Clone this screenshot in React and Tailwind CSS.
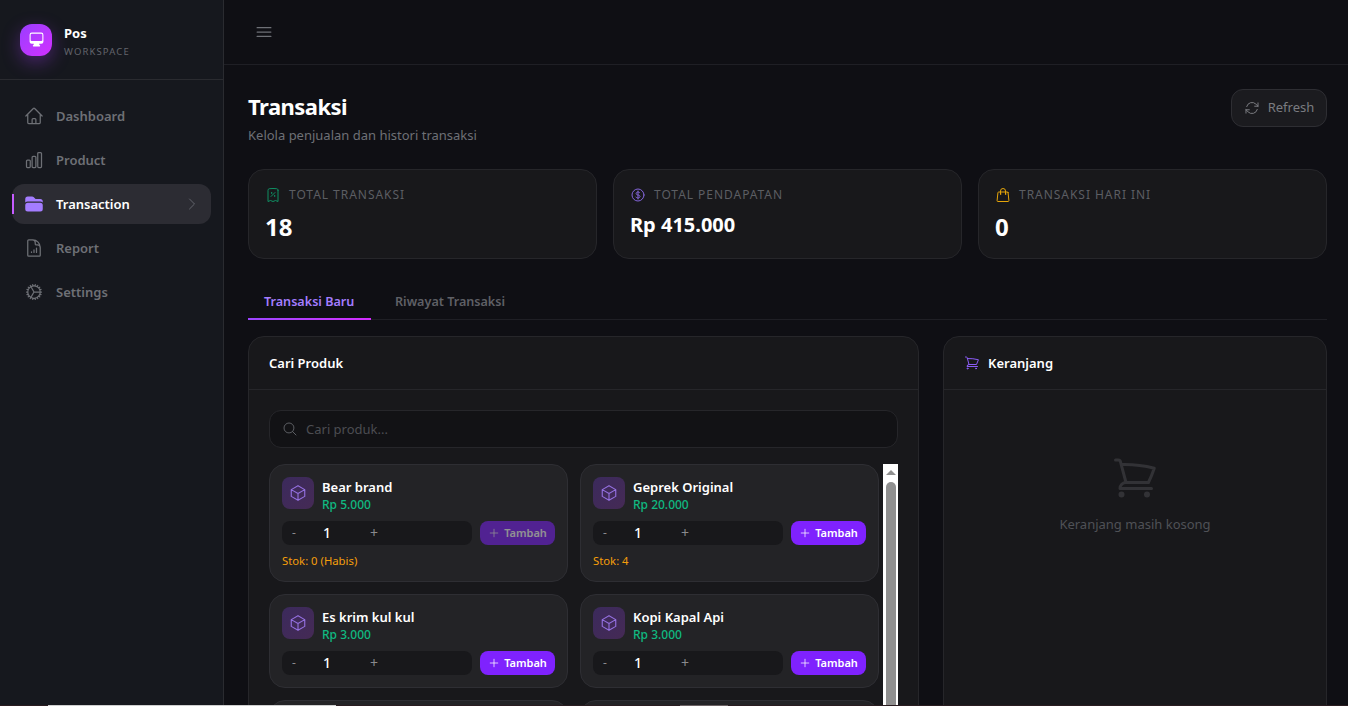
import {
  HiComputerDesktop,
  HiFolder,
  HiOutlineArrowPath,
  HiOutlineBars3,
  HiOutlineChartBar,
  HiOutlineChevronRight,
  HiOutlineCog,
  HiOutlineCube,
  HiOutlineCurrencyDollar,
  HiOutlineDocumentChartBar,
  HiOutlineHome,
  HiOutlineMagnifyingGlass,
  HiOutlinePlus,
  HiOutlineReceiptPercent,
  HiOutlineShoppingBag,
  HiOutlineShoppingCart,
} from "react-icons/hi2";

const navItems = [
  { label: "Dashboard", icon: HiOutlineHome },
  { label: "Product", icon: HiOutlineChartBar },
  { label: "Transaction", icon: HiFolder, active: true },
  { label: "Report", icon: HiOutlineDocumentChartBar },
  { label: "Settings", icon: HiOutlineCog },
];

const products = [
  { name: "Bear brand", price: "Rp 5.000", stock: "Stok: 0 (Habis)", disabled: true },
  { name: "Geprek Original", price: "Rp 20.000", stock: "Stok: 4" },
  { name: "Es krim kul kul", price: "Rp 3.000" },
  { name: "Kopi Kapal Api", price: "Rp 3.000" },
];

function Sidebar() {
  return (
    <aside className="flex w-[224px] shrink-0 flex-col border-r border-[#2a2b30] bg-[#16181e]">
      {/* Logo */}
      <div className="flex h-[80px] items-center gap-3 border-b border-[#2a2b30] px-5">
        <div className="flex h-8 w-8 items-center justify-center rounded-xl bg-gradient-to-br from-[#9a3cff] to-[#d22eff] text-white shadow-[0_6px_18px_rgba(168,60,255,0.35)]">
          <HiComputerDesktop className="h-[17px] w-[17px]" />
        </div>
        <div className="pt-[3px]">
          <p className="text-[13px] leading-[18px] font-bold text-white">Pos</p>
          <p className="mt-[3px] text-[9.5px] leading-[14px] tracking-[0.12em] text-[#62646c]">WORKSPACE</p>
        </div>
      </div>

      {/* Navigation */}
      <nav className="flex flex-col gap-1 px-3 py-4">
        {navItems.map((item) => (
          <div
            key={item.label}
            className={`relative flex h-10 items-center rounded-xl pl-3 pr-[11px] ${
              item.active ? "bg-[#2c2c33] text-white" : "text-[#6e7076]"
            }`}
          >
            {item.active && <span className="absolute left-0 top-[10px] h-5 w-[2px] bg-[#c65cff]" />}
            <item.icon className={`h-5 w-5 shrink-0 ${item.active ? "text-[#a47dff]" : ""}`} />
            <span className="ml-3 mt-[2px] text-[13px] font-semibold">{item.label}</span>
            {item.active && <HiOutlineChevronRight className="ml-auto h-4 w-4 text-[#62646c]" />}
          </div>
        ))}
      </nav>
    </aside>
  );
}

function StatCard({ icon: Icon, iconClass, label, value, valueClass }) {
  return (
    <div className="rounded-2xl border border-[#26262a] bg-[#18181b] px-4 pt-[17px]">
      <div className="flex items-center gap-2">
        <Icon className={`h-4 w-4 ${iconClass}`} />
        <span className="text-xs leading-4 tracking-[0.08em] text-[#5c5e63]">{label}</span>
      </div>
      <p className={`font-bold text-white ${valueClass}`}>{value}</p>
    </div>
  );
}

function ProductCard({ product }) {
  return (
    <div className="self-start rounded-2xl border border-[#2e2e33] bg-[#232326] p-3">
      <div className="flex items-start gap-2">
        <div className="flex h-8 w-8 shrink-0 items-center justify-center rounded-lg bg-gradient-to-br from-[#3b2a5c] to-[#452a55] text-[#9470e0]">
          <HiOutlineCube className="h-[18px] w-[18px]" />
        </div>
        <div>
          <p className="text-[13px] leading-5 font-semibold text-white">{product.name}</p>
          <p className="text-xs leading-4 font-medium text-[#10b981]">{product.price}</p>
        </div>
      </div>

      <div className="mt-2 flex gap-2">
        <div className="flex h-6 w-[190px] items-center rounded-lg bg-[#18181b] text-[#8a8a8e]">
          <span className="w-6 text-center text-xs">-</span>
          <span className="w-[42px] text-center text-sm font-medium text-white">1</span>
          <span className="ml-[14px] w-6 text-center text-sm">+</span>
        </div>
        <button
          className={`flex h-6 w-[75px] items-center justify-center gap-1 rounded-lg bg-[#7f22fe] text-[11px] font-semibold text-white ${
            product.disabled ? "opacity-50" : ""
          }`}
        >
          <HiOutlinePlus className="h-3 w-3" />
          Tambah
        </button>
      </div>

      {product.stock && <p className="mt-2 text-[11.3px] leading-4 text-[#f59e0b]">{product.stock}</p>}
    </div>
  );
}

export default function App() {
  return (
    <div
      className="relative flex h-screen overflow-hidden bg-[#0f0f14]"
      style={{ fontFamily: '"Noto Sans", sans-serif' }}
    >
      <Sidebar />

      <div className="flex min-w-0 flex-1 flex-col">
        {/* Topbar */}
        <header className="flex h-[65px] shrink-0 items-center border-b border-[#1f1f25] pl-[30px]">
          <HiOutlineBars3 className="h-5 w-5 text-[#6e7076]" />
        </header>

        <main className="min-h-0 flex-1 overflow-hidden pl-6 pr-[21px] pt-6">
          {/* Page title */}
          <div className="flex items-start justify-between">
            <div>
              <h1 className="text-[22px] leading-[34px] font-bold tracking-[-0.025em] text-white">Transaksi</h1>
              <p className="mt-[2px] text-[13px] leading-5 text-[#6e7076]">Kelola penjualan dan histori transaksi</p>
            </div>
            <button className="flex h-[38px] w-24 items-center justify-center gap-2 rounded-xl border border-[#2e2e33] bg-[#1b1b1f] text-[13px] text-[#7a7b80]">
              <HiOutlineArrowPath className="h-4 w-4" />
              Refresh
            </button>
          </div>

          {/* Stats */}
          <div className="mt-6 grid h-[90px] grid-cols-3 gap-4">
            <StatCard
              icon={HiOutlineReceiptPercent}
              iconClass="text-[#0f8f63]"
              label="TOTAL TRANSAKSI"
              value="18"
              valueClass="mt-2 text-2xl leading-8"
            />
            <StatCard
              icon={HiOutlineCurrencyDollar}
              iconClass="text-[#8264d8]"
              label="TOTAL PENDAPATAN"
              value="Rp 415.000"
              valueClass="mt-2 text-xl leading-7"
            />
            <StatCard
              icon={HiOutlineShoppingBag}
              iconClass="text-[#e5a50a]"
              label="TRANSAKSI HARI INI"
              value="0"
              valueClass="mt-2 text-2xl leading-8"
            />
          </div>

          {/* Tabs */}
          <div className="mt-[26px] flex h-[35px] gap-2 border-b border-[#1f1f25]">
            <div className="relative w-[123px] pl-4 text-[12.6px] leading-[34px] font-semibold text-[#a47dff]">
              Transaksi Baru
              <span className="absolute inset-x-0 bottom-[-1px] h-[2px] bg-gradient-to-r from-[#9b45ff] to-[#d42cff]" />
            </div>
            <div className="px-4 text-[12.6px] leading-[34px] font-semibold text-[#5f6066]">Riwayat Transaksi</div>
          </div>

          <div className="mt-4 flex gap-6">
            {/* Cari Produk */}
            <section className="min-w-0 flex-1 rounded-t-2xl border border-[#26262a] bg-[#18181b]">
              <div className="flex h-[53px] items-center border-b border-[#26262a] px-5">
                <h2 className="pt-[2px] text-[13px] font-semibold text-white">Cari Produk</h2>
              </div>
              <div className="p-5">
                <div className="flex h-[38px] items-center gap-2 rounded-xl border border-[#26262a] bg-[#121215] px-3 text-[#4c4d52]">
                  <HiOutlineMagnifyingGlass className="h-4 w-4 text-[#5c5e63]" />
                  <span className="pt-[2px] text-[13px]">Cari produk...</span>
                </div>
                <div className="mt-4 flex items-start gap-1">
                  <div className="grid w-[610px] grid-cols-2 gap-3">
                    {products.map((product) => (
                      <ProductCard key={product.name} product={product} />
                    ))}
                    {/* next row, only its top edge is on screen */}
                    <div className="h-[94px] rounded-2xl border border-[#2e2e33] bg-[#232326]" />
                    <div className="h-[94px] rounded-2xl border border-[#2e2e33] bg-[#232326]" />
                  </div>
                  {/* Scrollbar */}
                  <div className="flex h-[400px] w-[15px] shrink-0 flex-col items-center bg-white">
                    <div className="mt-[6px] h-0 w-0 border-x-[5px] border-b-[5px] border-x-transparent border-b-[#8f8f8f]" />
                    <div className="mt-[7px] h-[380px] w-[10px] rounded-full bg-[#8f8f8f]" />
                  </div>
                </div>
              </div>
            </section>

            {/* Keranjang */}
            <section className="w-[384px] shrink-0 self-stretch rounded-t-2xl border border-[#26262a] bg-[#18181b]">
              <div className="flex h-[53px] items-center gap-2 border-b border-[#26262a] px-5">
                <HiOutlineShoppingCart className="h-4 w-4 text-[#8b5cf6]" />
                <h2 className="pt-[2px] text-[13px] font-semibold text-white">Keranjang</h2>
              </div>
              <div className="flex flex-col items-center py-16">
                <HiOutlineShoppingCart className="h-12 w-12 text-[#323236]" />
                <p className="mt-3 text-[13px] leading-5 text-[#4f5156]">Keranjang masih kosong</p>
              </div>
            </section>
          </div>
        </main>
      </div>

      {/* Bottom window edge */}
      <div className="pointer-events-none absolute inset-x-0 bottom-0 flex h-px bg-[#2a1c20]">
        <span className="ml-[48px] w-[288px] bg-[#cfcfcf]" />
        <span className="ml-[344px] w-[48px] bg-[#6b6163]" />
      </div>
    </div>
  );
}
